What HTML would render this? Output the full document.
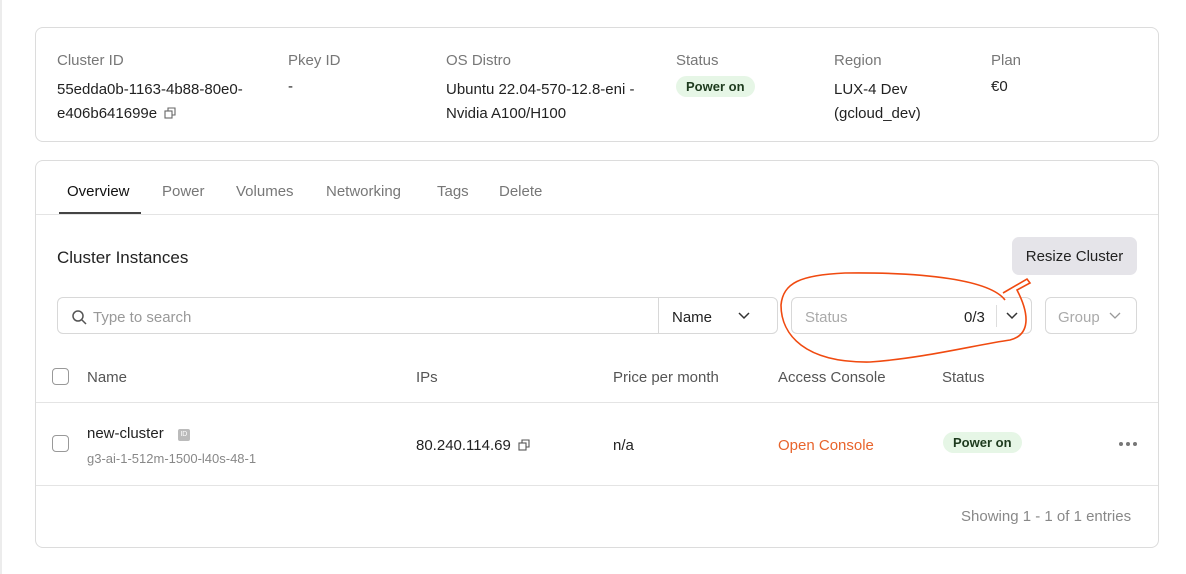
<!DOCTYPE html>
<html><head><meta charset="utf-8"><style>
*{box-sizing:border-box;margin:0;padding:0}
body{width:1186px;height:574px;background:#fff;font-family:"Liberation Sans",sans-serif;color:#222;position:relative;overflow:hidden;font-size:15px}
.a{position:absolute;white-space:nowrap}
.t{margin-top:2px}
.card{position:absolute;border:1px solid #dcdcdc;border-radius:8px;background:#fff}
.lbl{color:#777}
.pill{background:#e6f6e6;color:#1d3a1d;font-weight:bold;font-size:13px;border-radius:12px;padding:3px 10px}
.box{position:absolute;border:1px solid #d8d8d8;border-radius:6px}
.g{color:#888}
.cb{position:absolute;width:17px;height:17px;border:1.5px solid #999;border-radius:4px}
.cp{display:inline-block;width:12px;height:12px;vertical-align:-1px;margin-left:3px}
</style></head><body>
<div class="a" style="left:0;top:0;width:2px;height:574px;background:#ececec"></div>
<div class="card" style="left:35px;top:27px;width:1124px;height:115px"></div>
<div class="a lbl t" style="left:57px;top:50px">Cluster ID</div>
<div class="a t" style="left:57px;top:76px;line-height:24px">55edda0b-1163-4b88-80e0-<br>e406b641699e <svg class="cp" viewBox="0 0 12 12" fill="none" stroke="#666" stroke-width="1.1"><rect x="1" y="4" width="7" height="7"/><path d="M4 4V1h7v7H8"/></svg></div>
<div class="a lbl t" style="left:288px;top:50px">Pkey ID</div>
<div class="a t" style="left:288px;top:76px">-</div>
<div class="a lbl t" style="left:446px;top:50px">OS Distro</div>
<div class="a t" style="left:446px;top:76px;line-height:24px">Ubuntu 22.04-570-12.8-eni -<br>Nvidia A100/H100</div>
<div class="a lbl t" style="left:676px;top:50px">Status</div>
<div class="a pill" style="left:676px;top:76px">Power on</div>
<div class="a lbl t" style="left:834px;top:50px">Region</div>
<div class="a t" style="left:834px;top:76px;line-height:24px">LUX-4 Dev<br>(gcloud_dev)</div>
<div class="a lbl t" style="left:991px;top:50px">Plan</div>
<div class="a t" style="left:991px;top:76px">€0</div>

<div class="card" style="left:35px;top:160px;width:1124px;height:388px"></div>
<div class="a" style="left:36px;top:214px;width:1122px;height:1px;background:#e4e4e4"></div>
<div class="a" style="left:59px;top:212px;width:82px;height:2px;background:#444"></div>
<div class="a t" style="left:67px;top:181px;color:#111">Overview</div>
<div class="a t" style="left:162px;top:181px;color:#777">Power</div>
<div class="a t" style="left:236px;top:181px;color:#777">Volumes</div>
<div class="a t" style="left:326px;top:181px;color:#777">Networking</div>
<div class="a t" style="left:437px;top:181px;color:#777">Tags</div>
<div class="a t" style="left:499px;top:181px;color:#777">Delete</div>
<div class="a t" style="left:57px;top:246px;font-size:17px">Cluster Instances</div>
<div class="a" style="left:1012px;top:237px;width:125px;height:38px;background:#e5e4e9;border-radius:7px;text-align:center;line-height:40px">Resize Cluster</div>
<div class="box" style="left:57px;top:297px;width:721px;height:37px"></div>
<div class="a" style="left:658px;top:298px;width:1px;height:35px;background:#d8d8d8"></div>
<svg class="a" style="left:71px;top:309px" width="16" height="16" viewBox="0 0 16 16" fill="none" stroke="#555" stroke-width="1.5"><circle cx="7" cy="7" r="5"/><path d="M11 11l4 4"/></svg>
<div class="a t" style="left:93px;top:307px;color:#999">Type to search</div>
<div class="a t" style="left:672px;top:307px">Name</div>
<svg class="a" style="left:738px;top:312px" width="12" height="8" viewBox="0 0 12 8" fill="none" stroke="#333" stroke-width="1.5"><path d="M1 1l5 5 5-5"/></svg>
<div class="box" style="left:791px;top:297px;width:241px;height:37px"></div>
<div class="a t" style="left:805px;top:307px;color:#aaa">Status</div>
<div class="a t" style="left:964px;top:307px">0/3</div>
<div class="a" style="left:996px;top:305px;width:1px;height:22px;background:#ddd"></div>
<svg class="a" style="left:1006px;top:312px" width="12" height="8" viewBox="0 0 12 8" fill="none" stroke="#333" stroke-width="1.5"><path d="M1 1l5 5 5-5"/></svg>
<div class="box" style="left:1045px;top:297px;width:92px;height:37px"></div>
<div class="a t" style="left:1058px;top:307px;color:#aaa">Group</div>
<svg class="a" style="left:1109px;top:312px" width="12" height="8" viewBox="0 0 12 8" fill="none" stroke="#999" stroke-width="1.3"><path d="M1 1l5 5 5-5"/></svg>
<svg class="a" style="left:775px;top:265px" width="270" height="105" viewBox="0 0 270 105" fill="none" stroke="#f04a10" stroke-width="1.6"><path d="M230 35C215 15 150 7 70 8 C25 10 8 18 6 40 C6 70 30 98 95 97 C150 93 200 80 235 75 C255 70 255 50 242 25 L 255 18 L 252 14 L 228 28"/></svg>
<div class="cb" style="left:52px;top:368px"></div>
<div class="a t" style="left:87px;top:367px;color:#555">Name</div>
<div class="a t" style="left:416px;top:367px;color:#555">IPs</div>
<div class="a t" style="left:613px;top:367px;color:#555">Price per month</div>
<div class="a t" style="left:778px;top:367px;color:#555">Access Console</div>
<div class="a t" style="left:942px;top:367px;color:#555">Status</div>
<div class="a" style="left:36px;top:402px;width:1122px;height:1px;background:#e4e4e4"></div>
<div class="cb" style="left:52px;top:435px"></div>
<div class="a t" style="left:87px;top:423px">new-cluster <span style="display:inline-block;width:12px;height:12px;background:#bbb;border-radius:2px;font-size:7px;color:#fff;text-align:center;line-height:12px;margin-left:10px;vertical-align:2px">ID</span></div>
<div class="a t" style="left:87px;top:449px;font-size:13px;color:#888">g3-ai-1-512m-1500-l40s-48-1</div>
<div class="a t" style="left:416px;top:435px">80.240.114.69 <svg class="cp" viewBox="0 0 12 12" fill="none" stroke="#555" stroke-width="1.1"><rect x="1" y="4" width="7" height="7"/><path d="M4 4V1h7v7H8"/></svg></div>
<div class="a t" style="left:613px;top:435px">n/a</div>
<div class="a t" style="left:778px;top:435px;color:#e8642c">Open Console</div>
<div class="a pill" style="left:943px;top:432px">Power on</div>
<svg class="a" style="left:1118px;top:441px" width="20" height="6" viewBox="0 0 20 6" fill="#777"><circle cx="3" cy="3" r="2"/><circle cx="10" cy="3" r="2"/><circle cx="17" cy="3" r="2"/></svg>
<div class="a" style="left:36px;top:485px;width:1122px;height:1px;background:#e4e4e4"></div>
<div class="a t" style="left:961px;top:506px;color:#888">Showing 1 - 1 of 1 entries</div>
</body></html>
